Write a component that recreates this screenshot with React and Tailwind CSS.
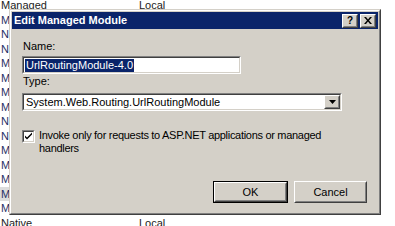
import React from "react";

const rows = ["M","N","N","M","M","M","M","N","N","M","M","M","M","M"];

function Raised({ className = "", children }) {
  return (
    <div className={"border border-t-white border-l-white border-b-[#404040] border-r-[#404040] " + className}>
      <div className="w-full h-full border border-t-[#d4d0c8] border-l-[#d4d0c8] border-b-[#808080] border-r-[#808080] flex items-center justify-center">
        {children}
      </div>
    </div>
  );
}

function Sunken({ className = "", children }) {
  return (
    <div className={"border border-t-[#808080] border-l-[#808080] border-b-white border-r-white " + className}>
      <div className="w-full h-full border border-t-[#404040] border-l-[#404040] border-b-[#d4d0c8] border-r-[#d4d0c8] bg-white flex items-center">
        {children}
      </div>
    </div>
  );
}

export default function App() {
  return (
    <div className="relative w-[395px] h-[226px] bg-white overflow-hidden text-[11px] text-black" style={{ fontFamily: '"Liberation Sans", Arial, sans-serif' }}>
      {/* background list */}
      <div className="flex flex-col -mt-[2px]">
        <div className="h-[14.5px] flex items-center">
          <span className="w-[139px] pl-[1px] text-[#222]">Managed</span>
          <span className="text-[#222]">Local</span>
        </div>
        {rows.map((r, i) => (
          <div key={i} className="h-[14.5px] flex items-center">
            <span className={"w-[12px] h-full flex items-center pl-[1px] text-[#1e2f66] " + (i === 12 ? "bg-[#dcdcdc]" : "")}>{r}</span>
          </div>
        ))}
        <div className="h-[14.5px] flex items-center">
          <span className="w-[139px] pl-[1px] text-[#222]">Native</span>
          <span className="text-[#222]">Local</span>
        </div>
      </div>

      {/* dialog */}
      <div className="absolute left-[9px] top-[9px] w-[372px] h-[206px] border border-t-[#d4d0c8] border-l-[#d4d0c8] border-b-[#404040] border-r-[#404040]">
        <div className="w-full h-full border border-t-white border-l-white border-b-[#808080] border-r-[#808080] bg-[#d4d0c8] p-[1px] flex flex-col">
          <div className="h-[17px] bg-[#0a246a] flex items-center pl-[2px] pr-[2px]">
            <span className="text-white font-bold text-[11px] flex-1">Edit Managed Module</span>
            <Raised className="w-[16px] h-[14px] bg-[#d4d0c8]">
              <span className="font-bold text-[10px] leading-none">?</span>
            </Raised>
            <Raised className="w-[16px] h-[14px] bg-[#d4d0c8] ml-[2px]">
              <svg width="8" height="7" viewBox="0 0 8 7"><path d="M0 0h2l2 2.5L6 0h2L5 3.5 8 7H6L4 4.5 2 7H0l3-3.5z" fill="#000" /></svg>
            </Raised>
          </div>
          <div className="flex-1 flex flex-col pl-[10px] pr-[10px]">
            <div className="mt-[11px] h-[13px] leading-[13px] pl-[1px]">Name:</div>
            <Sunken className="mt-[3px] w-[219px] h-[18px]">
              <span className="ml-[1px] bg-[#0a246a] text-white leading-[13px] px-[1px]">UrlRoutingModule-4.0</span>
            </Sunken>
            <div className="mt-[1px] h-[13px] leading-[13px] pl-[1px]">Type:</div>
            <Sunken className="mt-[5px] w-[320px] h-[18px]">
              <span className="flex-1 pl-[2px] leading-[13px]">System.Web.Routing.UrlRoutingModule</span>
              <Raised className="w-[16px] h-[14px] bg-[#d4d0c8] mr-0">
                <svg width="7" height="4" viewBox="0 0 7 4"><path d="M0 0h7L3.5 4z" fill="#000" /></svg>
              </Raised>
            </Sunken>
            <div className="mt-[18px] flex items-start">
              <Sunken className="w-[13px] h-[13px] shrink-0 mt-[1px]">
                <svg width="9" height="9" viewBox="0 0 9 9" className="mx-auto"><path d="M1 3.5l2 2 5-5v2l-5 5-2-2z" fill="#000" /></svg>
              </Sunken>
              <div className="ml-[4px] leading-[13px] tracking-[-0.3px]">Invoke only for requests to ASP.NET applications or managed<br />handlers</div>
            </div>
            <div className="flex-1" />
            <div className="flex justify-end gap-[6px] mb-[9px] mr-[1px]">
              <div className="border border-black w-[75px] h-[22px]">
                <Raised className="w-full h-full bg-[#d4d0c8]"><span>OK</span></Raised>
              </div>
              <Raised className="w-[73px] h-[22px] bg-[#d4d0c8]"><span>Cancel</span></Raised>
            </div>
          </div>
        </div>
      </div>
    </div>
  );
}
